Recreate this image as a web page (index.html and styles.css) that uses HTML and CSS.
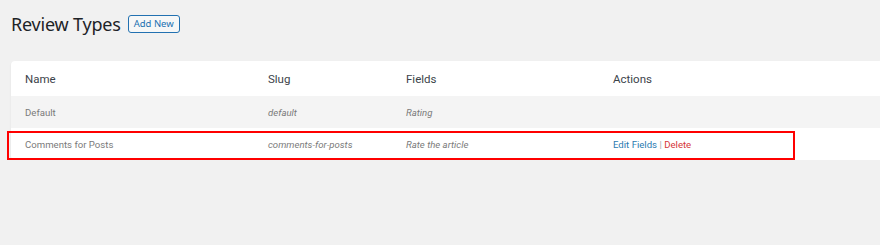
FILE: index.html
```html
<!DOCTYPE html>
<html lang="en">
<head>
<meta charset="UTF-8" />
<title>Review Types</title>
<link rel="stylesheet" href="styles.css">
</head>
<body>

<div class="wrap">
  <div class="page-head">
    <h1>Review Types</h1>
    <a href="#" class="add-new">Add New</a>
  </div>

  <div class="card">
    <div class="row head">
      <div>Name</div>
      <div>Slug</div>
      <div>Fields</div>
      <div>Actions</div>
    </div>
    <div class="row alt">
      <div>Default</div>
      <div class="em">default</div>
      <div class="em">Rating</div>
      <div></div>
    </div>
    <div class="row">
      <div>Comments for Posts</div>
      <div class="em">comments-for-posts</div>
      <div class="em">Rate the article</div>
      <div class="actions"><a href="#" class="edit">Edit Fields</a> <span class="sep">|</span> <a href="#" class="delete">Delete</a></div>
      <div class="highlight"></div>
    </div>
  </div>
</div>

</body>
</html>
```

FILE: styles.css
```css
body {
  margin: 0;
  background: #f1f1f1;
  color: #1d2327;
  font-family: Roboto, 'Noto Sans', sans-serif;
}
.wrap {
  padding: 12px 0 0 11px;
}
.page-head {
  display: flex; align-items: center; gap: 7px;
  height: 23px;
}
.page-head h1 {
  margin: 0;
  font-family: 'Noto Sans', sans-serif;
  font-size: 18px; font-weight: 400;
  letter-spacing: -0.2px;
  color: #1d2327;
}
.add-new {
  display: inline-block;
  padding: 1px 5px;
  border: 1px solid #2271b1; border-radius: 3px;
  background: #f6f7f7;
  color: #2271b1; text-decoration: none;
  font-family: 'Noto Sans', sans-serif;
  font-size: 9.5px; line-height: 14px;
  margin-top: 1px;
}
.card {
  margin-top: 26px;
  background: #fff;
  border-radius: 4px 0 0 4px;
  box-shadow: 0 1px 2px rgba(0,0,0,0.08);
}
.row {
  display: grid;
  grid-template-columns: 243px 138px 207px 1fr;
  align-items: center;
  height: 32px;
  padding-left: 14px;
  font-size: 9.6px;
  color: #7a7a7a;
  position: relative;
}
.row.head {
  height: 35px;
  font-size: 11.5px;
  color: #3c434a;
}
.row.alt {
  background: #f4f4f4;
}
.em {
  font-style: italic;
}
.actions a {
  text-decoration: none;
}
.edit { color: #2a7ab0; }
.delete { color: #d63638; }
.sep { color: #a7aaad; }
.highlight {
  position: absolute;
  left: -4px; top: 3px;
  width: 784px; height: 25px;
  border: 2px solid #f00;
}
```
